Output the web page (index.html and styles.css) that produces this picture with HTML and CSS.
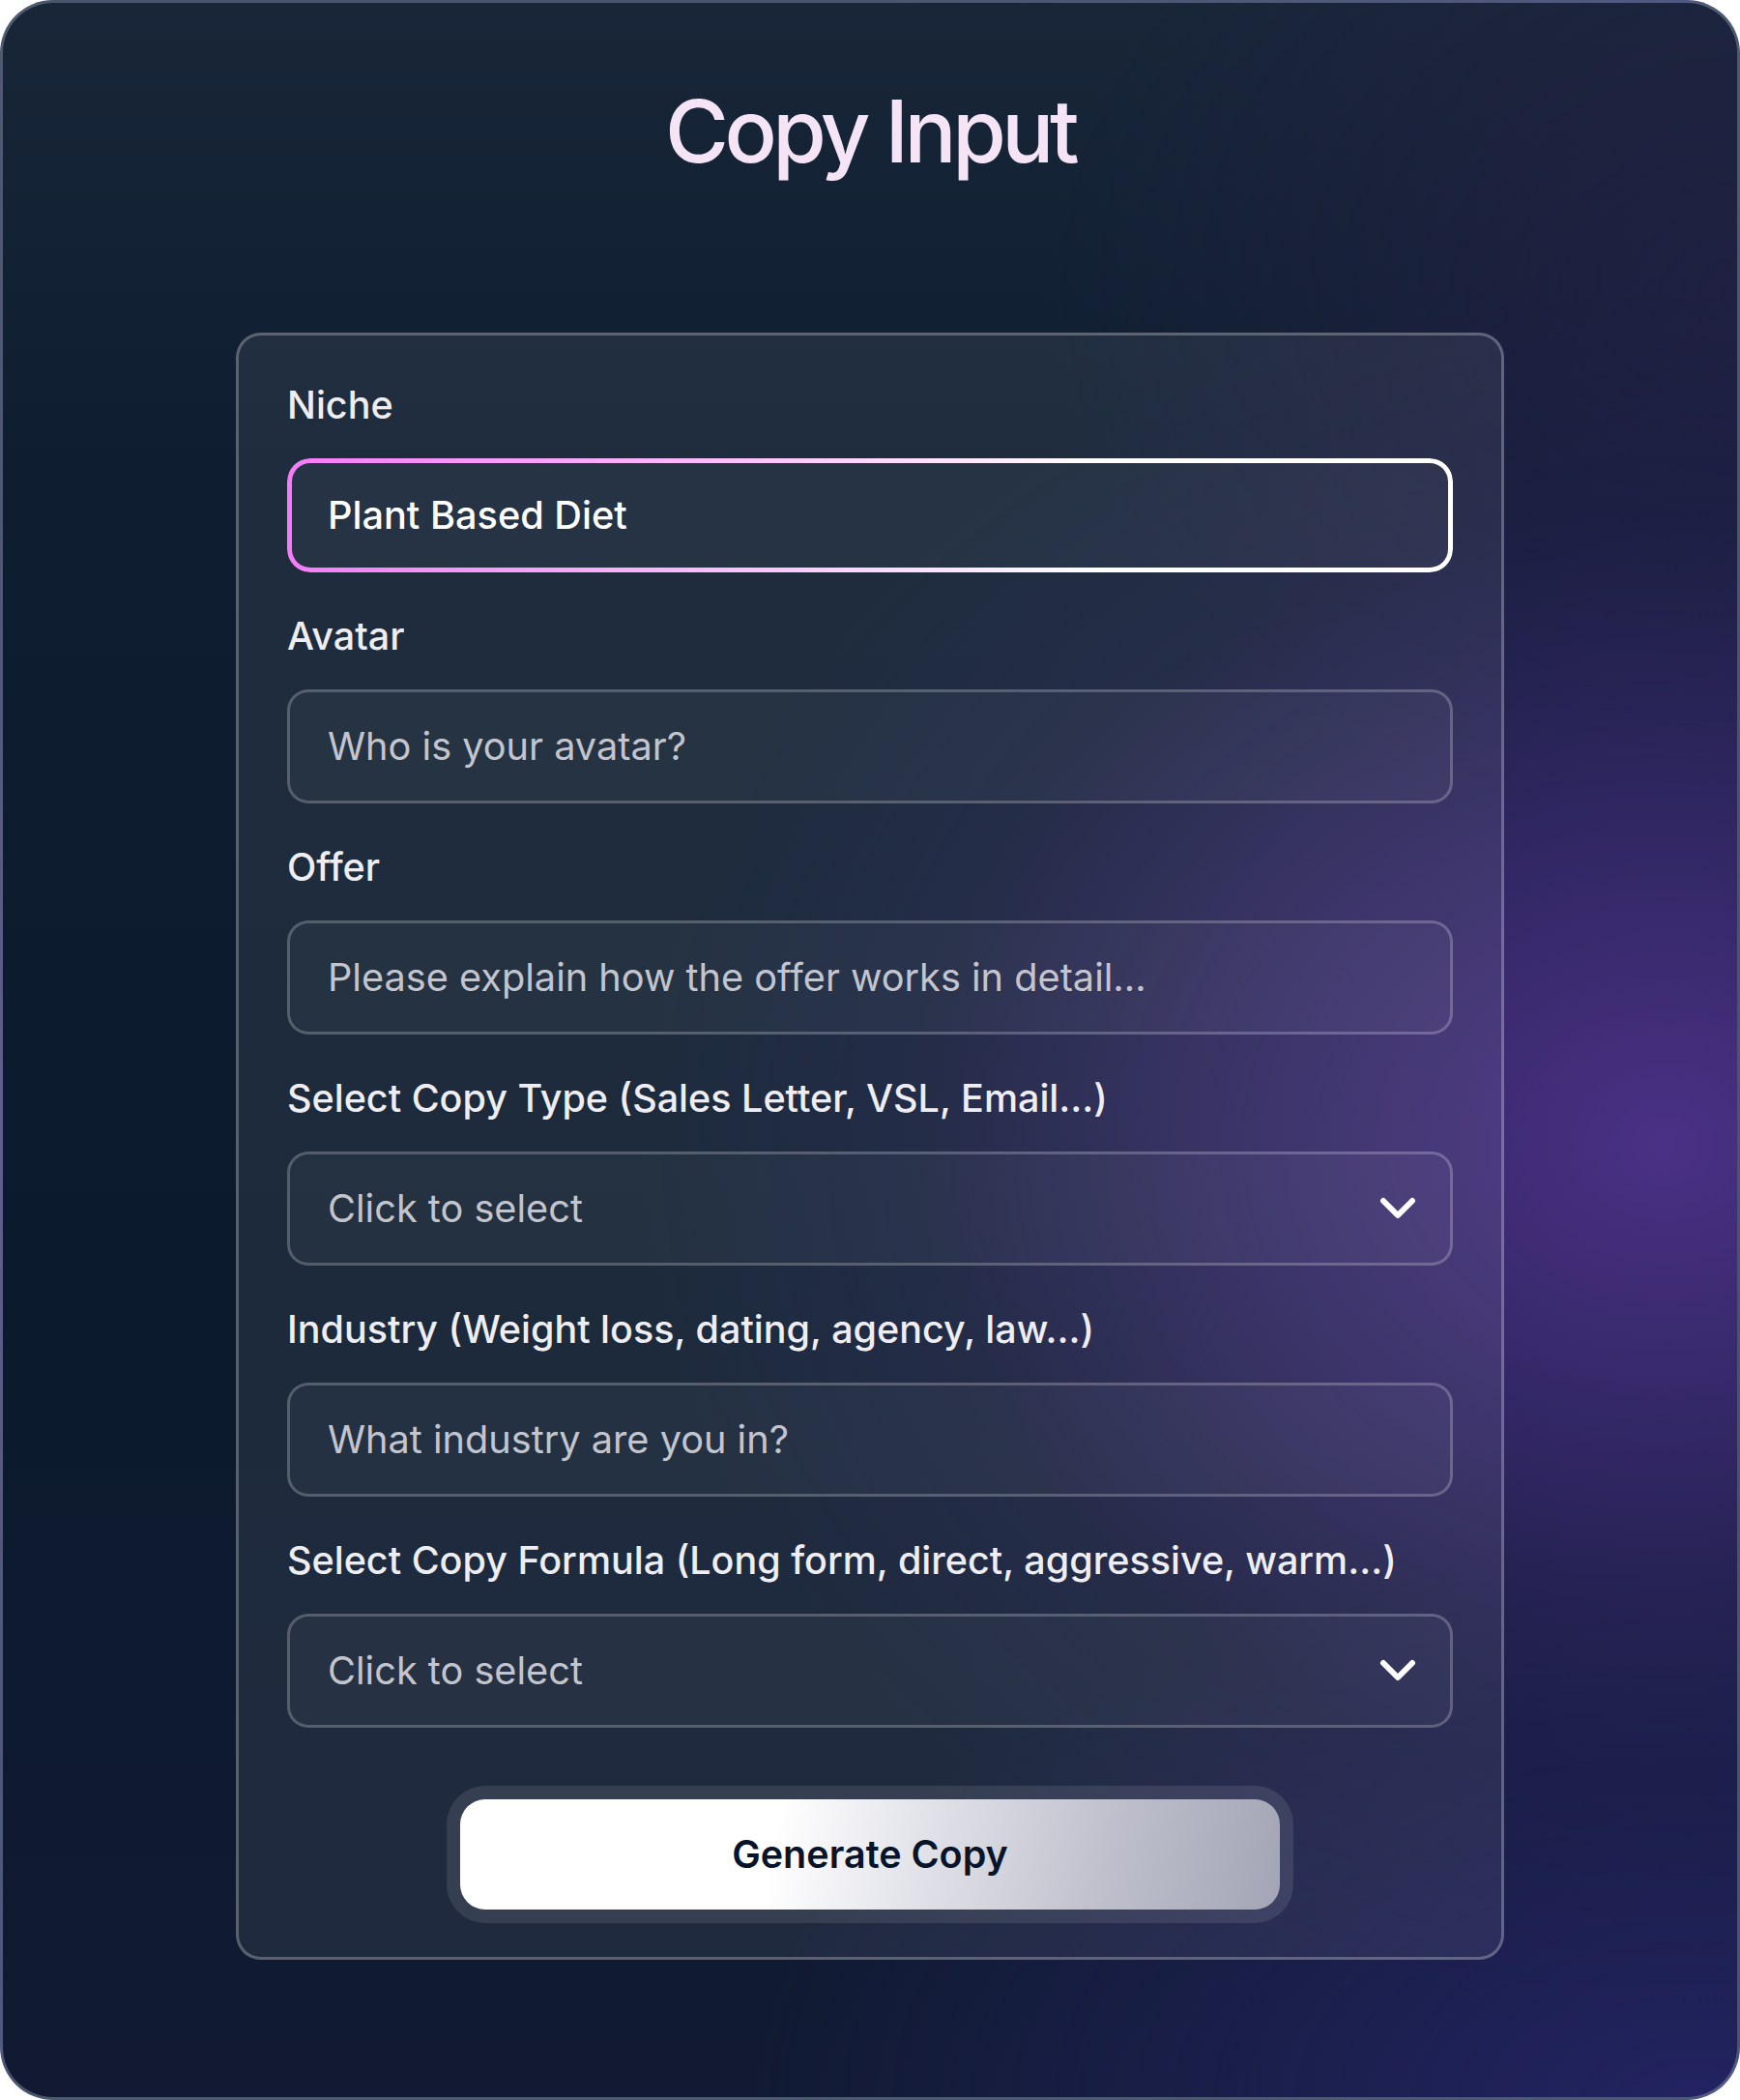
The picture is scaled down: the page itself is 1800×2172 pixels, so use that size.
FILE: index.html
```html
<!DOCTYPE html>
<html lang="en">
<head>
    <meta charset="UTF-8">
    <meta name="viewport" content="width=device-width, initial-scale=1.0">
    <title>Copy Input</title>
    <link rel="stylesheet" href="styles.css">
</head>
<body>
    <div class="frame">
        <h1 class="title">Copy Input</h1>

        <form class="card" id="copyForm">
            <div class="field">
                <label for="niche">Niche</label>
                <div class="focus-wrap">
                    <input type="text" id="niche" class="input" value="Plant Based Diet">
                </div>
            </div>

            <div class="field">
                <label for="avatar">Avatar</label>
                <input type="text" id="avatar" class="input" placeholder="Who is your avatar?">
            </div>

            <div class="field">
                <label for="offer">Offer</label>
                <input type="text" id="offer" class="input" placeholder="Please explain how the offer works in detail...">
            </div>

            <div class="field">
                <label>Select Copy Type (Sales Letter, VSL, Email...)</label>
                <button type="button" class="input select">
                    <span>Click to select</span>
                    <svg width="38" height="24" viewBox="0 0 38 24"><path d="M4 4 L19 19 L34 4" fill="none" stroke="#fff" stroke-width="6" stroke-linecap="round" stroke-linejoin="round"/></svg>
                </button>
            </div>

            <div class="field">
                <label for="industry">Industry (Weight loss, dating, agency, law...)</label>
                <input type="text" id="industry" class="input" placeholder="What industry are you in?">
            </div>

            <div class="field">
                <label>Select Copy Formula (Long form, direct, aggressive, warm...)</label>
                <button type="button" class="input select">
                    <span>Click to select</span>
                    <svg width="38" height="24" viewBox="0 0 38 24"><path d="M4 4 L19 19 L34 4" fill="none" stroke="#fff" stroke-width="6" stroke-linecap="round" stroke-linejoin="round"/></svg>
                </button>
            </div>

            <div class="generate-ring">
                <button type="button" class="generate">Generate Copy</button>
            </div>
        </form>
    </div>
</body>
</html>
```

FILE: styles.css
```css
body {
    margin: 0;
    background: #fff;
    font-family: 'Inter', 'Noto Sans', sans-serif;
}
.frame {
    box-sizing: border-box;
    width: 1800px;
    height: 2172px;
    padding-top: 79px;
    border: 3px solid rgba(120, 135, 155, 0.55);
    border-radius: 55px;
    overflow: hidden;
    background:
        radial-gradient(ellipse 1250px 1050px at 1720px 1180px, rgba(96, 56, 162, 0.75) 0%, rgba(78, 48, 142, 0.5) 35%, rgba(50, 36, 105, 0.2) 62%, rgba(40, 30, 90, 0) 85%),
        radial-gradient(ellipse 1300px 750px at 1750px 2172px, rgba(36, 36, 102, 0.9) 0%, rgba(30, 30, 80, 0) 75%),
        radial-gradient(ellipse 900px 700px at 1800px 300px, rgba(40, 32, 75, 0.6) 0%, rgba(40, 32, 75, 0) 80%),
        linear-gradient(180deg, #182638 0%, #0e1d30 22%, #0b1a2d 60%, #111a32 100%);
}
.title {
    margin: 0;
    text-align: center;
    font-size: 90px;
    line-height: 108px;
    font-weight: 500;
    letter-spacing: -0.05em;
    color: #f5e4f6;
}
.card {
    box-sizing: border-box;
    width: 1312px;
    margin: 154px auto 0;
    padding: 44px 50px 35px;
    border: 3px solid rgba(255, 255, 255, 0.26);
    border-radius: 26px;
    background: rgba(255, 255, 255, 0.07);
    display: flex;
    flex-direction: column;
    gap: 38px;
}
.field {
    display: flex;
    flex-direction: column;
}
.field label {
    font-size: 39.5px;
    line-height: 56px;
    font-weight: 500;
    color: #eeeef2;
    margin-bottom: 27px;
}
.input {
    box-sizing: border-box;
    width: 100%;
    height: 118px;
    padding: 0 35px 0 39px;
    border: 3px solid rgba(255, 255, 255, 0.22);
    border-radius: 22px;
    background: rgba(255, 255, 255, 0.035);
    font-family: 'Inter', 'Noto Sans', sans-serif;
    font-size: 39.7px;
    font-weight: 400;
    color: #fff;
    outline: none;
}
.input::placeholder {
    color: #c3c5ce;
}
.focus-wrap {
    position: relative;
}
.focus-wrap .input {
    border-color: transparent;
    font-weight: 500;
}
.focus-wrap::before {
    content: "";
    position: absolute;
    inset: 0;
    padding: 5px;
    border-radius: 24px;
    background: linear-gradient(90deg, #f57cf7 0%, #fbc4fb 40%, #ffffff 70%);
    -webkit-mask: linear-gradient(#000 0 0) content-box, linear-gradient(#000 0 0);
    -webkit-mask-composite: xor;
    mask-composite: exclude;
    pointer-events: none;
}
.select {
    display: flex;
    align-items: center;
    justify-content: space-between;
    text-align: left;
    color: #c3c5ce;
    cursor: pointer;
}
.select svg {
    display: block;
}
.generate-ring {
    align-self: center;
    margin-top: 22px;
    width: 876px;
    box-sizing: border-box;
    padding: 14px;
    border-radius: 40px;
    background: rgba(255, 255, 255, 0.1);
}
.generate {
    display: block;
    width: 100%;
    height: 114px;
    border: none;
    border-radius: 26px;
    background: linear-gradient(100deg, #ffffff 0%, #ffffff 38%, #e3e4ea 55%, #bfc0cc 78%, #a3a5b6 100%);
    font-family: 'Inter', 'Noto Sans', sans-serif;
    font-size: 39.5px;
    font-weight: 600;
    color: #07142a;
    cursor: pointer;
}
```
